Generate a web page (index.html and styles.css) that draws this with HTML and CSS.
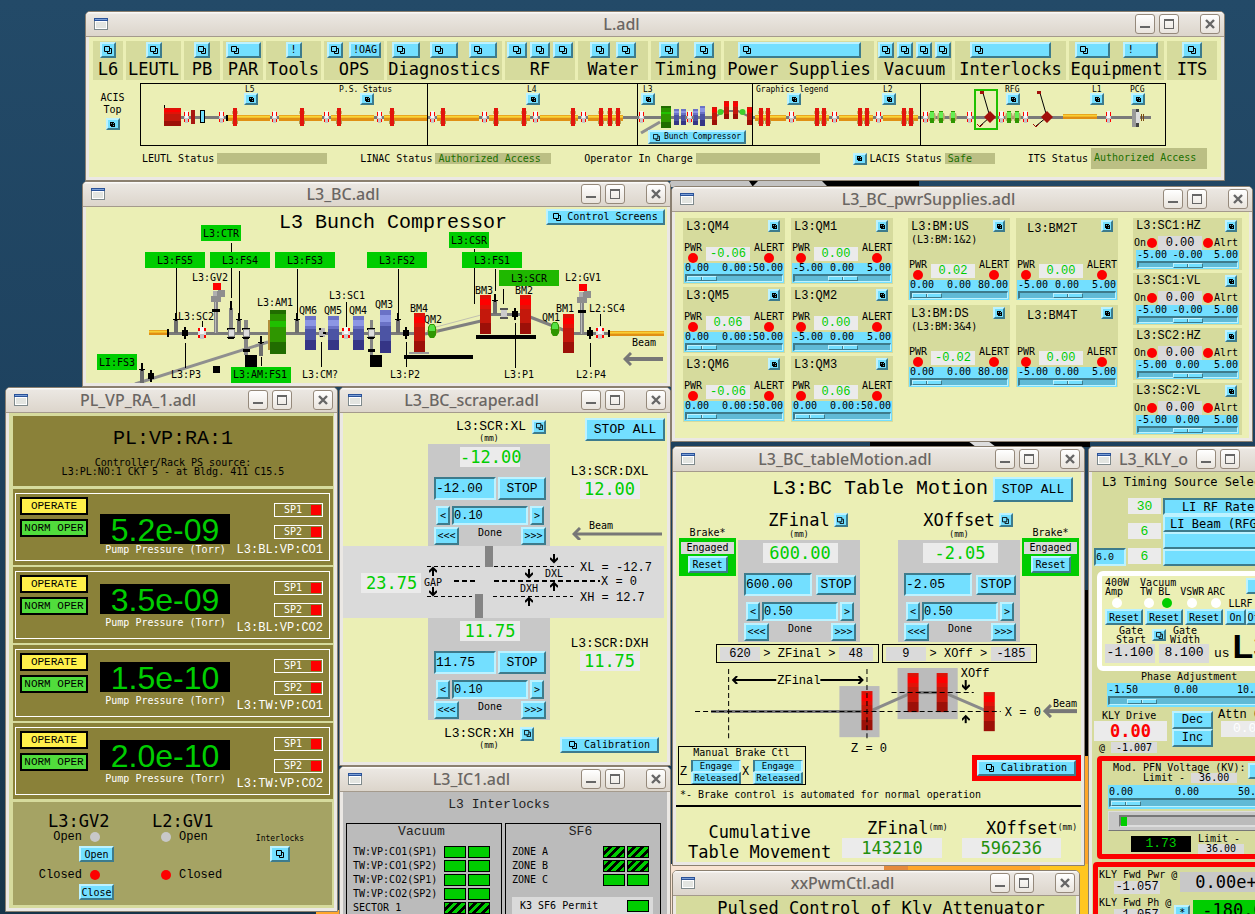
FILE: index.html
```html
<!DOCTYPE html>
<html lang="en">
<head>
<meta charset="utf-8">
<title>L3 Bunch Compressor controls</title>
<link rel="stylesheet" href="styles.css">
</head>
<body>
<svg class="defs" width="0" height="0" aria-hidden="true">
  <defs>
    <symbol id="dup" viewBox="0 0 8 8"><path d="M.5 .5h5v5h-5zM5.5 2.5h2v5h-4v-2" fill="none" stroke="#000"/></symbol>
    <symbol id="dots" viewBox="0 0 5 5"><path d="M0 0h4v1h1v4h-4v-1h-1z"/><path d="M1 1h1v1h-1zM3 3h1v1h-1zM3 1h1v1h-1z" fill="#4fa5bb"/></symbol>
    <symbol id="app" viewBox="0 0 14 12"><rect width="14" height="12" fill="#7f8a8c"/><rect x="1" y="1" width="12" height="10" fill="#fff"/><rect x="2" y="4" width="10" height="6" fill="#e3e5e1"/><rect width="14" height="3" fill="#2a5299"/><rect x="1" y="1" width="12" height="1" fill="#7b9fd6"/></symbol>
    <symbol id="min" viewBox="0 0 12 12"><rect x="1" y="8" width="10" height="2" fill="#666"/></symbol>
    <symbol id="max" viewBox="0 0 12 12"><rect x="1.5" y="1.5" width="9" height="9" fill="none" stroke="#666"/><rect x="1" y="1" width="10" height="2" fill="#666"/></symbol>
    <symbol id="close" viewBox="0 0 12 12"><path d="M2 2l8 8M10 2l-8 8" stroke="#666" stroke-width="2.4"/></symbol>
    <linearGradient id="gold" x1="0" y1="0" x2="0" y2="1"><stop offset=".15" stop-color="#eaa61e"/><stop offset=".2" stop-color="#fbdc3a"/><stop offset=".5" stop-color="#f0b428"/><stop offset=".55" stop-color="#e08f14"/></linearGradient>
    <linearGradient id="red" x1="0" y1="0" x2="0" y2="1"><stop offset=".1" stop-color="#de1208"/><stop offset=".1" stop-color="#ff0000"/><stop offset=".25" stop-color="#ff0000"/><stop offset=".25" stop-color="#e21208"/><stop offset=".36" stop-color="#e21208"/><stop offset=".36" stop-color="#c4180c"/><stop offset=".73" stop-color="#c4180c"/><stop offset=".73" stop-color="#9c1008"/></linearGradient>
    <linearGradient id="blue" x1="0" y1="0" x2="0" y2="1"><stop offset=".12" stop-color="#6a72c6"/><stop offset=".12" stop-color="#8c96e4"/><stop offset=".28" stop-color="#8c96e4"/><stop offset=".28" stop-color="#6a72c6"/><stop offset=".38" stop-color="#6a72c6"/><stop offset=".38" stop-color="#4c54a4"/><stop offset=".72" stop-color="#4c54a4"/><stop offset=".72" stop-color="#353586"/></linearGradient>
    <linearGradient id="green" x1="0" y1="0" x2="0" y2="1"><stop offset=".1" stop-color="#216c00"/><stop offset=".1" stop-color="#2c9200"/><stop offset=".25" stop-color="#2c9200"/><stop offset=".25" stop-color="#20c000"/><stop offset=".38" stop-color="#20c000"/><stop offset=".38" stop-color="#2f9600"/><stop offset=".72" stop-color="#2f9600"/><stop offset=".72" stop-color="#216c00"/></linearGradient>
    <g id="flange"><rect x="-4" y="-1" width="9" height="3" fill="#7a7a7a"/><path d="M-2-5h1v10h-1zM2-5h1v10h-1z" fill="#f00"/><path d="M-2-1h5v3h-5z" fill="#ccc"/><rect x="-1" y="-6" width="3" height="12" fill="#f6f6f6"/><rect x="-1" y="1" width="3" height="5" fill="#c6c6c6"/></g>
    <g id="flangelg"><rect x="-4" y="-5" width="8" height="10" fill="#f00"/><rect x="-4" y="-2" width="8" height="4" fill="#ddd"/><rect x="-2" y="-6" width="4" height="12" fill="#f6f6f6"/><rect x="-2" y="1" width="4" height="5" fill="#c6c6c6"/></g>
    <g id="disk"><rect x="-3" y="-6" width="6" height="3" fill="#c9b567"/><rect x="-3" y="3" width="6" height="4" fill="#b59b50"/><rect x="-2" y="-9" width="4" height="18" fill="#e2160c"/></g>
    <g id="quad"><path d="M-4 0l1-4h6l1 4l-1 4h-6z" fill="#b7a96c"/><rect x="-2" y="-6" width="4" height="12" fill="#2f9600"/><rect x="-2" y="-5" width="4" height="6" fill="#66ef52"/></g>
    <g id="bigquad"><path d="M-5 0l3-4h5l3 4l-3 5h-5z" fill="#a99c58"/><path d="M-2-7h4l2 3v8l-2 3h-4l-2-3v-8z" fill="#2f9600"/><path d="M-2-6h4l1 3v3h-6v-3z" fill="#57e145"/></g>
    <g id="station"><rect x="-2" y="-13" width="4" height="13" fill="#6e6e6e"/><rect x="-1" y="-20" width="2" height="8"/><rect x="-3" y="-14" width="6" height="1"/></g>
    <g id="probe"><path d="M-1-6h2v3h2v6h-2v3h-2v-3h-2v-6h2z"/></g>
    <g id="cross"><path d="M-4-5h8v2h-8zM-4 4h8v1h-1v1h-6v-1h-1z"/><rect x="-3" y="-4" width="7" height="8" fill="#8a8a8a"/><rect x="-2" y="-3" width="5" height="6" fill="#dcdcdc"/></g>
    <g id="valve"><rect x="1" y="18" width="4" height="32" fill="#858585"/><rect x="2" y="18" width="1" height="32" fill="#bbb"/><rect width="8" height="7" fill="#f00"/><path d="M0 8h5v-1h7v7h-4v5h-10v-6h2z" fill="#8e8e8e"/><path d="M0 8h4v5h-4z" fill="#b0b0b0"/><rect x="-1" y="26" width="8" height="3"/></g>
    <marker id="tip" viewBox="0 0 8 8" refX="6" refY="4" markerWidth="8" markerHeight="8" markerUnits="userSpaceOnUse" orient="auto-start-reverse"><path d="M2 0l4 4l-4 4" fill="none" stroke="#000" stroke-width="2"/></marker>
    <marker id="beamtip" viewBox="0 0 9 14" refX="6" refY="7" markerWidth="9" markerHeight="14" markerUnits="userSpaceOnUse" orient="auto-start-reverse"><path d="M1 1l6 6l-6 6" fill="none" stroke="#777" stroke-width="3"/></marker>
  </defs>
</svg>

<main class="desktop">
<svg class="wallpaper" viewBox="0 0 1255 914" preserveAspectRatio="none" aria-hidden="true">
  <rect x="671" y="181" width="248" height="6"/><path d="M671 181l-4 6h86l-4-6zM752 187l6-6h64l6 6z" fill="#c3c3c3"/>
  <rect x="870" y="441" width="220" height="6"/><path d="M968 441h20l8 6h-20z" fill="#ddd"/>
  <rect x="1084" y="590" width="6" height="170"/><rect x="1084" y="756" width="6" height="158" fill="#ffa62a"/>
  <rect x="660" y="864" width="430" height="50" fill="#f9e4d2"/><path d="M884 864h206v50h-206z" fill="#e58a3c"/><path d="M908 864h182v50h-182z" fill="#ffa62a"/><path d="M1040 864h50v50h-50z" fill="#ffc61f"/>
  <rect x="316" y="910" width="24" height="4" fill="#ffa62a"/>
</svg>

<section class="win w-main">
  <header class="bar"><svg class="app"><use href="#app"/></svg><h1>L.adl</h1><button aria-label="Minimize"><svg><use href="#min"/></svg></button><button aria-label="Maximize"><svg><use href="#max"/></svg></button><button class="x" aria-label="Close"><svg><use href="#close"/></svg></button></header>
  <div class="body main">
    <nav class="groups">
      <div class="g g30"><div><button class="b" aria-label="L6"><svg class="i"><use href="#dup"/></svg></button></div><h2>L6</h2></div>
      <div class="g g55"><div><button class="b" aria-label="LEUTL"><svg class="i"><use href="#dup"/></svg></button></div><h2>LEUTL</h2></div>
      <div class="g g36"><div><button class="b" aria-label="PB"><svg class="i"><use href="#dup"/></svg></button></div><h2>PB</h2></div>
      <div class="g g40"><div><button class="b w35" aria-label="PAR"><svg class="i"><use href="#dup"/></svg></button></div><h2>PAR</h2></div>
      <div class="g g55"><div><button class="b">!</button></div><h2>Tools</h2></div>
      <div class="g g60"><div><button class="b" aria-label="OPS"><svg class="i"><use href="#dup"/></svg></button><button class="b w32">!OAG</button></div><h2>OPS</h2></div>
      <div class="g g115"><div><button class="b w28" aria-label="Diagnostics 1"><svg class="i"><use href="#dup"/></svg></button><button class="b w28" aria-label="Diagnostics 2"><svg class="i"><use href="#dup"/></svg></button><button class="b w28" aria-label="Diagnostics 3"><svg class="i"><use href="#dup"/></svg></button></div><h2>Diagnostics</h2></div>
      <div class="g g70"><div><button class="b w20" aria-label="RF 1"><svg class="i"><use href="#dup"/></svg></button><button class="b w20" aria-label="RF 2"><svg class="i"><use href="#dup"/></svg></button><button class="b w20" aria-label="RF 3"><svg class="i"><use href="#dup"/></svg></button></div><h2>RF</h2></div>
      <div class="g g70 near"><div><button class="b w20" aria-label="Water 1"><svg class="i"><use href="#dup"/></svg></button><button class="b w20" aria-label="Water 2"><svg class="i"><use href="#dup"/></svg></button></div><h2>Water</h2></div>
      <div class="g g70"><div><button class="b w20" aria-label="Timing 1"><svg class="i"><use href="#dup"/></svg></button><button class="b w20" aria-label="Timing 2"><svg class="i"><use href="#dup"/></svg></button></div><h2>Timing</h2></div>
      <div class="g g150"><div><button class="b w123" aria-label="Power Supplies"><svg class="i"><use href="#dup"/></svg></button></div><h2>Power Supplies</h2></div>
      <div class="g g75"><div><button class="b" aria-label="Vacuum 1"><svg class="i"><use href="#dup"/></svg></button><button class="b" aria-label="Vacuum 2"><svg class="i"><use href="#dup"/></svg></button><button class="b" aria-label="Vacuum 3"><svg class="i"><use href="#dup"/></svg></button><button class="b" aria-label="Vacuum 4"><svg class="i"><use href="#dup"/></svg></button></div><h2>Vacuum</h2></div>
      <div class="g g111"><div><button class="b w81" aria-label="Interlocks"><svg class="i"><use href="#dup"/></svg></button></div><h2>Interlocks</h2></div>
      <div class="g g95"><div><button class="b w35" aria-label="Equipment"><svg class="i"><use href="#dup"/></svg></button><button class="b w35">!</button></div><h2>Equipment</h2></div>
      <div class="g g50"><div><button class="b w20" aria-label="ITS"><svg class="i"><use href="#dup"/></svg></button></div><h2>ITS</h2></div>
    </nav>
    <div class="linac">
      <div class="acis"><span>ACIS<br>Top</span><button class="b m" aria-label="ACIS Top"><svg class="d"><use href="#dots"/></svg></button></div>
      <div class="canvas">
        <svg viewBox="140 83 1026 63" class="draw">
          <rect x="140.500" y="83.500" width="1025" height="62" fill="none" stroke="#000"/>
          <rect x="165" y="116" width="463" height="3" fill="#7a7a7a"/><rect x="622" y="116" width="95" height="3" fill="#7a7a7a"/><rect x="750" y="116" width="401" height="3" fill="#7a7a7a"/>
          <g fill="url(#gold)"><rect x="228" y="115" width="42" height="6"/><rect x="279" y="115" width="43" height="6"/><rect x="331" y="115" width="43" height="6"/><rect x="384" y="115" width="43" height="6"/><rect x="437" y="115" width="42" height="6"/><rect x="489" y="115" width="41" height="6"/><rect x="540" y="115" width="38" height="6"/><rect x="588" y="115" width="35" height="6"/><rect x="755" y="115" width="31" height="6"/><rect x="796" y="115" width="33" height="6"/><rect x="839" y="115" width="34" height="6"/><rect x="883" y="115" width="35" height="6"/><rect x="1063" y="114" width="34" height="5"/></g>
          <path d="M427.500 83v62M637.500 83v62M752.500 83v62M920.500 83v62" stroke="#000"/>
          <rect x="164" y="108" width="17" height="18" fill="url(#red)"/><path d="M164.500 105v3" stroke="#000"/>
          <rect x="191" y="110" width="4" height="14" fill="#a81710"/><rect x="200.500" y="110.500" width="4" height="12" fill="#73dfff" stroke="#000"/><rect x="226" y="115" width="2" height="6"/>
          <g><use href="#flange" x="186" y="117"/><use href="#flange" x="221" y="117"/><use href="#flange" x="274" y="117"/><use href="#flange" x="326" y="117"/><use href="#flange" x="379" y="117"/><use href="#flange" x="432" y="117"/><use href="#flange" x="484" y="117"/><use href="#flange" x="535" y="117"/><use href="#flange" x="583" y="117"/><use href="#flange" x="641" y="117"/><use href="#flange" x="791" y="117"/><use href="#flange" x="834" y="117"/><use href="#flange" x="878" y="117"/><use href="#flange" x="925" y="117"/><use href="#flange" x="969" y="117"/><use href="#flange" x="1001" y="117"/><use href="#flange" x="1025" y="117"/><use href="#flange" x="1108" y="117"/></g>
          <g><use href="#disk" x="235" y="117"/><use href="#disk" x="302" y="117"/><use href="#disk" x="339" y="117"/><use href="#disk" x="392" y="117"/><use href="#disk" x="443" y="117"/><use href="#disk" x="496" y="117"/><use href="#disk" x="524" y="117"/><use href="#disk" x="573" y="117"/><use href="#disk" x="601" y="117"/><use href="#disk" x="610" y="117"/><use href="#disk" x="618" y="117"/><use href="#disk" x="761" y="117"/><use href="#disk" x="768" y="117"/><use href="#disk" x="817" y="117"/><use href="#disk" x="824" y="117"/><use href="#disk" x="860" y="117"/><use href="#disk" x="867" y="117"/><use href="#disk" x="904" y="117"/><use href="#disk" x="911" y="117"/></g>
          <path d="M641 133l19-11" stroke="#8f8f8f" stroke-width="3"/><rect x="661" y="106" width="10" height="22" fill="url(#green)"/>
          <g fill="url(#blue)"><rect x="674" y="109" width="5" height="16"/><rect x="681" y="109" width="5" height="16"/><rect x="693" y="109" width="5" height="16"/><rect x="700" y="106" width="5" height="20"/></g><use href="#flange" x="689" y="117"/>
          <path d="M715 117l9-6h14l12 6" fill="none" stroke="#7a7a7a" stroke-width="2"/>
          <g fill="url(#red)"><rect x="712" y="107" width="5" height="18"/><rect x="724" y="101" width="5" height="18"/><rect x="733" y="101" width="5" height="18"/><rect x="747" y="107" width="5" height="18"/></g>
          <circle cx="720.500" cy="112" r="3" fill="#3fce2c"/><circle cx="742.500" cy="112" r="3" fill="#3fce2c"/>
          <g><use href="#quad" x="932" y="117"/><use href="#quad" x="941" y="117"/><use href="#quad" x="953" y="117"/><use href="#quad" x="1009" y="117"/><use href="#quad" x="1017" y="117"/></g>
          <rect x="975" y="90" width="22" height="39" fill="none" stroke="#20c000" stroke-width="2"/>
          <path d="M990 117l-7-24M990 117l-10 9M1047 117l-7-24M1047 117l-11 9" stroke="#000"/>
          <path d="M990 111l6 6l-6 6l-6-6zM1047 111l6 6l-6 6l-6-6zM980 91h4v3h-4zM1037 91h4v3h-4z" fill="#a1100a"/><path d="M977 124l3 3l3-3M1033 124l3 3l3-3" fill="none" stroke="#a1100a"/>
          <rect x="1132" y="109" width="7" height="18" fill="#999"/><path d="M1136 109h3v4h-3zM1136 122h3v5h-3z" fill="#444"/><rect x="1136" y="112" width="4" height="11" fill="#ddd"/><path d="M1141.500 114v7M1143.500 114v7" stroke="#7a4a10"/>
          <g class="t8"><text x="245" y="92">L5</text><text x="339" y="92">P.S. Status</text><text x="527" y="92">L4</text><text x="643" y="92">L3</text><text x="756" y="92">Graphics legend</text><text x="883" y="92">L2</text><text x="1005" y="92">RFG</text><text x="1092" y="92">L1</text><text x="1130" y="92">PCG</text></g>
        </svg>
        <button class="b m pin p-l5" aria-label="L5"><svg class="d"><use href="#dots"/></svg></button>
        <button class="b m pin p-ps" aria-label="P.S. Status"><svg class="d"><use href="#dots"/></svg></button>
        <button class="b m pin p-l4" aria-label="L4"><svg class="d"><use href="#dots"/></svg></button>
        <button class="b m pin p-l3" aria-label="L3"><svg class="d"><use href="#dots"/></svg></button>
        <button class="b m pin p-gl" aria-label="Graphics legend"><svg class="d"><use href="#dots"/></svg></button>
        <button class="b m pin p-l2" aria-label="L2"><svg class="d"><use href="#dots"/></svg></button>
        <button class="b m pin p-rfg" aria-label="RFG"><svg class="d"><use href="#dots"/></svg></button>
        <button class="b m pin p-l1" aria-label="L1"><svg class="d"><use href="#dots"/></svg></button>
        <button class="b m pin p-pcg" aria-label="PCG"><svg class="d"><use href="#dots"/></svg></button>
        <button class="b pin p-bc"><svg class="d"><use href="#dup"/></svg>Bunch Compressor</button>
      </div>
    </div>
    <div class="status">
      <span>LEUTL Status <output class="s110"></output></span>
      <span>LINAC Status <output class="s116">Authorized Access</output></span>
      <span>Operator In Charge <output class="s124"></output></span>
      <span><button class="b m" aria-label="LACIS"><svg class="d"><use href="#dots"/></svg></button>LACIS Status <output class="s50">Safe</output></span>
      <span class="its">ITS Status <output class="s116 tall">Authorized Access</output></span>
    </div>
  </div>
</section>

<section class="win w-bc">
  <header class="bar"><svg class="app"><use href="#app"/></svg><h1>L3_BC.adl</h1><button aria-label="Minimize"><svg><use href="#min"/></svg></button><button aria-label="Maximize"><svg><use href="#max"/></svg></button><button class="x" aria-label="Close"><svg><use href="#close"/></svg></button></header>
  <div class="body canvas">
    <svg viewBox="86 207 581 176" class="draw">
      <text x="393" y="228" text-anchor="middle" class="t20">L3 Bunch Compressor</text>
      <path d="M135 384L268 342" stroke="#8f8f8f" stroke-width="3"/>
      <g fill="#7a7a7a"><rect x="168" y="332" width="252" height="3"/><rect x="565" y="332" width="46" height="3"/><rect x="485" y="313" width="40" height="3"/></g>
      <path d="M425 334l56-13M530 317l36 14" stroke="#7f7f7f" stroke-width="3"/><path d="M436 327l45-12" stroke="#c0c0b0"/>
      <rect x="149" y="330" width="19" height="5" fill="url(#gold)"/><rect x="167" y="329" width="2" height="8"/><rect x="610" y="331" width="54" height="5" fill="url(#gold)"/><rect x="608" y="330" width="2" height="7"/>
      <path d="M176.500 268v50M231.500 243v55M239.500 271v42M297.500 269v44M398.500 269v44M474.500 249v55M495.500 269v22M503.500 289v15M515.500 323v45M590.500 343v24M600.500 314v12M406.500 342v25M321.500 342v25M346.500 302v25M185.500 343v25M202.500 321v6M261.500 357v9" stroke="#000"/>
      <g fill="#00cd00"><rect x="201" y="225" width="40" height="16"/><rect x="145" y="252" width="60" height="16"/><rect x="210" y="252" width="60" height="16"/><rect x="275" y="252" width="60" height="16"/><rect x="367" y="252" width="60" height="16"/><rect x="462" y="252" width="60" height="16"/><rect x="449" y="232" width="40" height="16"/><rect x="97" y="354" width="40" height="16"/><rect x="231" y="367" width="60" height="16"/><rect x="499" y="270" width="60" height="16" fill="#1fb800"/></g>
      <g><use href="#station" x="176" y="333"/><use href="#station" x="239" y="333"/><use href="#station" x="297" y="333"/><use href="#station" x="398" y="333"/><use href="#station" x="495" y="314"/><use href="#station" x="142" y="383"/><use href="#station" x="261" y="356"/></g>
      <rect x="229" y="308" width="4" height="24" fill="#858585"/><rect x="230" y="301" width="2" height="9"/>
      <g fill="#858585"><rect x="244" y="320" width="4" height="35"/><rect x="370" y="320" width="3" height="35"/></g><rect x="243" y="349" width="7" height="3"/><rect x="368" y="349" width="7" height="3"/>
      <use href="#cross" x="231" y="333"/><use href="#cross" x="246" y="333"/><use href="#cross" x="371" y="333"/>
      <g><use href="#probe" x="185" y="333"/><use href="#probe" x="151" y="376"/><use href="#probe" x="406" y="333"/><use href="#probe" x="515" y="314"/><use href="#probe" x="590" y="333"/></g>
      <g><use href="#flangelg" x="202" y="333"/><use href="#flangelg" x="346" y="333"/><use href="#flangelg" x="600" y="333"/></g>
      <use href="#valve" x="213" y="283"/><use href="#valve" x="579" y="284"/>
      <rect x="319" y="328" width="6" height="9" fill="#b9b9b9"/><path d="M319 328h2v2h-2zM323 332h3v2h-3zM320 336h3v1h-3z"/><rect x="501" y="308" width="6" height="11" fill="#ccc"/><path d="M500 308h8v2h-8zM500 317h8v2h-8z" fill="#555"/>
      <rect x="268" y="320" width="3" height="30" fill="#b08c3a"/><rect x="270" y="310" width="16" height="44" fill="url(#green)"/>
      <g fill="url(#blue)"><rect x="305" y="316" width="11" height="34"/><rect x="328" y="316" width="11" height="34"/><rect x="353" y="316" width="11" height="34"/><rect x="380" y="310" width="11" height="43"/></g>
      <g fill="url(#red)"><rect x="414" y="313" width="11" height="39"/><rect x="480" y="295" width="11" height="39"/><rect x="520" y="295" width="11" height="39"/><rect x="563" y="314" width="11" height="39"/></g>
      <use href="#bigquad" x="432" y="331"/><use href="#bigquad" x="555" y="329"/>
      <rect x="409" y="352" width="20" height="2" fill="#999"/>
      <path d="M404 355h69v4h-69zM476 335h60v4h-60zM245 355h12v12h-12zM213 366h7v7h-7zM370 355h12v12h-12z"/>
      <path d="M663 359H626" stroke="#777" stroke-width="4" marker-end="url(#beamtip)"/>
      <g class="t10"><g text-anchor="middle"><text x="221" y="237">L3:CTR</text><text x="175" y="264">L3:FS5</text><text x="240" y="264">L3:FS4</text><text x="305" y="264">L3:FS3</text><text x="397" y="264">L3:FS2</text><text x="492" y="264">L3:FS1</text><text x="469" y="244">L3:CSR</text><text x="529" y="282">L3:SCR</text><text x="117" y="366">LI:FS3</text><text x="260" y="378">L3:AM:FS1</text></g>
      <text x="192" y="281">L3:GV2</text><text x="257" y="306">L3:AM1</text><text x="178" y="320">L3:SC2</text><text x="299" y="314">QM6</text><text x="324" y="314">QM5</text><text x="349" y="314">QM4</text><text x="329" y="299">L3:SC1</text><text x="171" y="378">L3:P3</text><text x="302" y="378">L3:CM?</text><text x="375" y="308">QM3</text><text x="410" y="312">BM4</text><text x="424" y="323">QM2</text><text x="475" y="294">BM3</text><text x="515" y="294">BM2</text><text x="542" y="321">QM1</text><text x="556" y="312">BM1</text><text x="565" y="281">L2:GV1</text><text x="589" y="312">L2:SC4</text><text x="390" y="378">L3:P2</text><text x="504" y="378">L3:P1</text><text x="576" y="378">L2:P4</text><text x="632" y="346">Beam</text></g>
    </svg>
    <button class="b pin p-cs"><svg class="i"><use href="#dup"/></svg>Control Screens</button>
  </div>
</section>

<section class="win w-ps">
  <header class="bar"><svg class="app"><use href="#app"/></svg><h1>L3_BC_pwrSupplies.adl</h1><button aria-label="Minimize"><svg><use href="#min"/></svg></button><button aria-label="Maximize"><svg><use href="#max"/></svg></button><button class="x" aria-label="Close"><svg><use href="#close"/></svg></button></header>
  <div class="body supplies">
    <div class="pair">
      <div class="col">
        <article class="ps"><h3>L3:QM4</h3><button class="b s" aria-label="QM4"><svg class="d"><use href="#dots"/></svg></button><div class="mid"><span>PWR<i class="lamp"></i></span><output>-0.06</output><span>ALERT<i class="lamp"></i></span></div><div class="sl"><p><span>0.00</span><span>0.00</span><span>:50.00</span></p><input type="range" value="0" aria-label="QM4 current"></div></article>
        <article class="ps"><h3>L3:QM5</h3><button class="b s" aria-label="QM5"><svg class="d"><use href="#dots"/></svg></button><div class="mid"><span>PWR<i class="lamp"></i></span><output>0.06</output><span>ALERT<i class="lamp"></i></span></div><div class="sl"><p><span>0.00</span><span>0.00</span><span>:50.00</span></p><input type="range" value="0" aria-label="QM5 current"></div></article>
        <article class="ps"><h3>L3:QM6</h3><button class="b s" aria-label="QM6"><svg class="d"><use href="#dots"/></svg></button><div class="mid"><span>PWR<i class="lamp"></i></span><output>-0.06</output><span>ALERT<i class="lamp"></i></span></div><div class="sl"><p><span>0.00</span><span>0.00</span><span>:50.00</span></p><input type="range" value="0" aria-label="QM6 current"></div></article>
      </div>
      <div class="col">
        <article class="ps"><h3>L3:QM1</h3><button class="b s" aria-label="QM1"><svg class="d"><use href="#dots"/></svg></button><div class="mid"><span>PWR<i class="lamp"></i></span><output>0.00</output><span>ALERT<i class="lamp"></i></span></div><div class="sl"><p><span>-5.00</span><span>0.00</span><span>5.00</span></p><input type="range" value="50" aria-label="QM1 current"></div></article>
        <article class="ps"><h3>L3:QM2</h3><button class="b s" aria-label="QM2"><svg class="d"><use href="#dots"/></svg></button><div class="mid"><span>PWR<i class="lamp"></i></span><output>0.00</output><span>ALERT<i class="lamp"></i></span></div><div class="sl"><p><span>-5.00</span><span>0.00</span><span>5.00</span></p><input type="range" value="50" aria-label="QM2 current"></div></article>
        <article class="ps"><h3>L3:QM3</h3><button class="b s" aria-label="QM3"><svg class="d"><use href="#dots"/></svg></button><div class="mid"><span>PWR<i class="lamp"></i></span><output>0.06</output><span>ALERT<i class="lamp"></i></span></div><div class="sl"><p><span>0.00</span><span>0.00</span><span>:50.00</span></p><input type="range" value="0" aria-label="QM3 current"></div></article>
      </div>
    </div>
    <div class="pair wide">
      <div class="col">
        <article class="ps"><h3>L3:BM:US<small>(L3:BM:1&amp;2)</small></h3><button class="b s" aria-label="BM US"><svg class="d"><use href="#dots"/></svg></button><div class="mid"><span>PWR<i class="lamp"></i></span><output>0.02</output><span>ALERT<i class="lamp"></i></span></div><div class="sl"><p><span>0.00</span><span>0.00</span><span>80.00</span></p><input type="range" value="0" aria-label="BM US current"></div></article>
        <article class="ps"><h3>L3:BM:DS<small>(L3:BM:3&amp;4)</small></h3><button class="b s" aria-label="BM DS"><svg class="d"><use href="#dots"/></svg></button><div class="mid"><span>PWR<i class="lamp"></i></span><output>-0.02</output><span>ALERT<i class="lamp"></i></span></div><div class="sl"><p><span>0.00</span><span>0.00</span><span>80.00</span></p><input type="range" value="0" aria-label="BM DS current"></div></article>
      </div>
      <div class="col">
        <article class="ps ctr"><h3>L3:BM2T</h3><button class="b s" aria-label="BM2T"><svg class="d"><use href="#dots"/></svg></button><div class="mid"><span>PWR<i class="lamp"></i></span><output>0.00</output><span>ALERT<i class="lamp"></i></span></div><div class="sl"><p><span>-5.00</span><span>0.00</span><span>5.00</span></p><input type="range" value="50" aria-label="BM2T current"></div></article>
        <article class="ps ctr"><h3>L3:BM4T</h3><button class="b s" aria-label="BM4T"><svg class="d"><use href="#dots"/></svg></button><div class="mid"><span>PWR<i class="lamp"></i></span><output>0.00</output><span>ALERT<i class="lamp"></i></span></div><div class="sl"><p><span>-5.00</span><span>0.00</span><span>5.00</span></p><input type="range" value="50" aria-label="BM4T current"></div></article>
      </div>
    </div>
    <div class="col sc">
      <article class="ps"><h3>L3:SC1:HZ</h3><button class="b s" aria-label="SC1 HZ"><svg class="d"><use href="#dots"/></svg></button><div class="mid">On<i class="lamp"></i><output>0.00</output><i class="lamp"></i>Alrt</div><div class="sl"><p><span>-5.00</span><span>-0.00</span><span>5.00</span></p><input type="range" value="50" aria-label="SC1 HZ current"></div></article>
      <article class="ps"><h3>L3:SC1:VL</h3><button class="b s" aria-label="SC1 VL"><svg class="d"><use href="#dots"/></svg></button><div class="mid">On<i class="lamp"></i><output>0.00</output><i class="lamp"></i>Alrt</div><div class="sl"><p><span>-5.00</span><span>-0.00</span><span>5.00</span></p><input type="range" value="50" aria-label="SC1 VL current"></div></article>
      <article class="ps"><h3>L3:SC2:HZ</h3><button class="b s" aria-label="SC2 HZ"><svg class="d"><use href="#dots"/></svg></button><div class="mid">On<i class="lamp"></i><output>0.00</output><i class="lamp"></i>Alrt</div><div class="sl"><p><span>-5.00</span><span>0.00</span><span>5.00</span></p><input type="range" value="50" aria-label="SC2 HZ current"></div></article>
      <article class="ps"><h3>L3:SC2:VL</h3><button class="b s" aria-label="SC2 VL"><svg class="d"><use href="#dots"/></svg></button><div class="mid">On<i class="lamp"></i><output>0.00</output><i class="lamp"></i>Alrt</div><div class="sl"><p><span>-5.00</span><span>0.00</span><span>5.00</span></p><input type="range" value="50" aria-label="SC2 VL current"></div></article>
    </div>
  </div>
</section>

<section class="win w-vp">
  <header class="bar"><svg class="app"><use href="#app"/></svg><h1>PL_VP_RA_1.adl</h1><button aria-label="Minimize"><svg><use href="#min"/></svg></button><button aria-label="Maximize"><svg><use href="#max"/></svg></button><button class="x" aria-label="Close"><svg><use href="#close"/></svg></button></header>
  <div class="body vp">
    <div class="olive vhead"><h2>PL:VP:RA:1</h2><p>Controller/Rack PS source:</p><p>L3:PL:NO:1 CKT 5 - at Bldg. 411 C15.5</p></div>
    <article class="olive pump first"><div class="box"><div class="modes"><b class="op">OPERATE</b><b class="norm">NORM OPER</b></div><div class="press"><output>5.2e-09</output><p>Pump Pressure (Torr)</p></div><div class="sps"><span>SP1<i></i></span><span>SP2<i></i></span><h3>L3:BL:VP:CO1</h3></div></div></article>
    <article class="olive pump"><div class="box"><div class="modes"><b class="op">OPERATE</b><b class="norm">NORM OPER</b></div><div class="press"><output>3.5e-09</output><p>Pump Pressure (Torr)</p></div><div class="sps"><span>SP1<i></i></span><span>SP2<i></i></span><h3>L3:BL:VP:CO2</h3></div></div></article>
    <article class="olive pump"><div class="box"><div class="modes"><b class="op">OPERATE</b><b class="norm">NORM OPER</b></div><div class="press"><output>1.5e-10</output><p>Pump Pressure (Torr)</p></div><div class="sps"><span>SP1<i></i></span><span>SP2<i></i></span><h3>L3:TW:VP:CO1</h3></div></div></article>
    <article class="olive pump"><div class="box"><div class="modes"><b class="op">OPERATE</b><b class="norm">NORM OPER</b></div><div class="press"><output>2.0e-10</output><p>Pump Pressure (Torr)</p></div><div class="sps"><span>SP1<i></i></span><span>SP2<i></i></span><h3>L3:TW:VP:CO2</h3></div></div></article>
    <div class="gates">
      <div class="gv left"><h3>L3:GV2</h3><p>Open<i class="lamp off"></i></p><button class="b">Open</button><p>Closed<i class="lamp"></i></p><button class="b">Close</button></div>
      <div class="gv"><h3>L2:GV1</h3><p><i class="lamp off"></i>Open</p><p class="second"><i class="lamp"></i>Closed</p></div>
      <div class="il"><label for="il">Interlocks</label><button class="b w20" id="il" aria-label="Interlocks"><svg class="i"><use href="#dup"/></svg></button></div>
    </div>
  </div>
</section>

<section class="win w-sc">
  <header class="bar"><svg class="app"><use href="#app"/></svg><h1>L3_BC_scraper.adl</h1><button aria-label="Minimize"><svg><use href="#min"/></svg></button><button aria-label="Maximize"><svg><use href="#max"/></svg></button><button class="x" aria-label="Close"><svg><use href="#close"/></svg></button></header>
  <div class="body scraper">
    <div class="srow">
      <div class="mcol xl"><h3>L3:SCR:XL<button class="b m" aria-label="XL"><svg class="d"><use href="#dup"/></svg></button></h3><small>(mm)</small>
        <div class="motor"><output class="lcd">-12.00</output><div class="r1"><input value="-12.00" aria-label="XL setpoint"><button class="b">STOP</button></div><div class="r2"><button class="b">&lt;</button><input value="0.10" aria-label="XL tweak"><button class="b">&gt;</button></div><div class="r3"><button class="b">&lt;&lt;&lt;</button><span>Done</span><button class="b">&gt;&gt;&gt;</button></div></div></div>
      <div class="side"><button class="b stopall">STOP ALL</button><h3>L3:SCR:DXL</h3><output class="lcd">12.00</output>
        <svg class="beam" viewBox="0 0 96 20"><text x="20" y="9" class="t10">Beam</text><path d="M93 14H6" stroke="#777" stroke-width="3" marker-end="url(#beamtip)"/></svg></div>
    </div>
    <svg viewBox="343 547 324 72" class="draw">
      <rect x="343" y="547" width="321" height="72" fill="#dadada"/><rect x="361" y="574" width="60" height="20" fill="#ebebeb"/><text x="366" y="590" class="t17 grn">23.75</text>
      <rect x="485" y="547" width="8" height="21" fill="#848484"/><rect x="475" y="595" width="8" height="24" fill="#848484"/>
      <path d="M427 567.500h56M494 567.500h80M427 597.500h45M493 597.500h80" stroke="#000" stroke-dasharray="4 3"/><path d="M454 582h22M494 582h106" stroke="#000" stroke-width="2" stroke-dasharray="5 3"/>
      <g stroke="#000" stroke-width="2" marker-end="url(#tip)"><path d="M433 577v-8"/><path d="M433 588v8"/><path d="M554 555v8"/><path d="M554 592v-8"/><path d="M529 570v8"/><path d="M529 607v-8"/></g>
      <rect x="545" y="569" width="20" height="11" fill="#dadada"/><rect x="519" y="584" width="22" height="11" fill="#dadada"/>
      <g class="t10"><text x="424" y="587">GAP</text><text x="545" y="578">DXL</text><text x="520" y="593">DXH</text></g>
      <g class="t12"><text x="580" y="572">XL = -12.7</text><text x="601" y="586">X = 0</text><text x="580" y="602">XH = 12.7</text></g>
    </svg>
    <div class="srow">
      <div class="mcol"><div class="motor"><output class="lcd">11.75</output><div class="r1"><input value="11.75" aria-label="XH setpoint"><button class="b">STOP</button></div><div class="r2"><button class="b">&lt;</button><input value="0.10" aria-label="XH tweak"><button class="b">&gt;</button></div><div class="r3"><button class="b">&lt;&lt;&lt;</button><span>Done</span><button class="b">&gt;&gt;&gt;</button></div></div>
        <h3>L3:SCR:XH<button class="b m" aria-label="XH"><svg class="d"><use href="#dup"/></svg></button></h3><small>(mm)</small></div>
      <div class="side low"><h3>L3:SCR:DXH</h3><output class="lcd">11.75</output><button class="b cal"><svg class="i"><use href="#dup"/></svg>Calibration</button></div>
    </div>
  </div>
</section>

<section class="win w-ic">
  <header class="bar"><svg class="app"><use href="#app"/></svg><h1>L3_IC1.adl</h1><button aria-label="Minimize"><svg><use href="#min"/></svg></button><button aria-label="Maximize"><svg><use href="#max"/></svg></button><button class="x" aria-label="Close"><svg><use href="#close"/></svg></button></header>
  <div class="body ic">
    <h2>L3 Interlocks</h2>
    <div class="ilocks">
      <div class="frame"><h3>Vacuum</h3>
        <p>TW:VP:CO1(SP1)<i></i><i></i></p><p>TW:VP:CO1(SP2)<i></i><i></i></p><p>TW:VP:CO2(SP1)<i></i><i></i></p><p>TW:VP:CO2(SP2)<i></i><i></i></p><p>SECTOR 1<i class="h"></i><i class="h"></i></p></div>
      <div class="frame"><h3>SF6</h3>
        <p>ZONE A<i class="h"></i><i class="h"></i></p><p>ZONE B<i class="h"></i><i class="h"></i></p><p>ZONE C<i></i><i></i></p><p class="permit">K3 SF6 Permit<i></i></p></div>
    </div>
  </div>
</section>

<section class="win w-tm">
  <header class="bar"><svg class="app"><use href="#app"/></svg><h1>L3_BC_tableMotion.adl</h1><button aria-label="Minimize"><svg><use href="#min"/></svg></button><button aria-label="Maximize"><svg><use href="#max"/></svg></button><button class="x" aria-label="Close"><svg><use href="#close"/></svg></button></header>
  <div class="body table">
    <div class="thead"><h2>L3:BC Table Motion</h2><button class="b stopall">STOP ALL</button></div>
    <div class="axes">
      <div class="brake"><small>Brake*</small><div><output>Engaged</output><button class="b">Reset</button></div></div>
      <div class="mcol"><h3>ZFinal<button class="b m" aria-label="ZFinal"><svg class="d"><use href="#dup"/></svg></button></h3><small>(mm)</small>
        <div class="motor t"><output class="lcd">600.00</output><div class="r1"><input value="600.00" aria-label="ZFinal setpoint"><button class="b">STOP</button></div><div class="r2"><button class="b">&lt;</button><input value="0.50" aria-label="ZFinal tweak"><button class="b">&gt;</button></div><div class="r3"><button class="b">&lt;&lt;&lt;</button><span>Done</span><button class="b">&gt;&gt;&gt;</button></div></div></div>
      <div class="mcol xoff"><h3>XOffset<button class="b m" aria-label="XOffset"><svg class="d"><use href="#dup"/></svg></button></h3><small>(mm)</small>
        <div class="motor t"><output class="lcd">-2.05</output><div class="r1"><input value="-2.05" aria-label="XOffset setpoint"><button class="b">STOP</button></div><div class="r2"><button class="b">&lt;</button><input value="0.50" aria-label="XOffset tweak"><button class="b">&gt;</button></div><div class="r3"><button class="b">&lt;&lt;&lt;</button><span>Done</span><button class="b">&gt;&gt;&gt;</button></div></div></div>
      <div class="brake"><small>Brake*</small><div><output>Engaged</output><button class="b">Reset</button></div></div>
    </div>
    <div class="limits"><div><output class="w40">620</output>&gt; ZFinal &gt;<output>48</output></div><div><output class="w40">9</output>&gt; XOff &gt;<output class="w40">-185</output></div></div>
    <svg viewBox="676 663 404 76" class="draw">
      <rect x="839" y="685" width="40" height="51" fill="#bbb"/><rect x="897" y="667" width="60" height="51" fill="#bbb"/>
      <path d="M711 710.500h157" stroke="#777" stroke-width="3"/><path d="M872 709l36-16M947 693l37 16" stroke="#8a8a8a" stroke-width="3"/><path d="M915 691.500h25" stroke="#777" stroke-width="3"/>
      <g fill="url(#red)"><rect x="861" y="690" width="11" height="39"/><rect x="907" y="672" width="11" height="39"/><rect x="936" y="672" width="11" height="39"/><rect x="983" y="691" width="11" height="39"/></g>
      <path d="M695 710.500h305M728.500 668v70M866.500 668v70M891 691.500h82" stroke="#000" stroke-dasharray="5 3"/>
      <path d="M733 679h129" stroke="#000" stroke-width="2" marker-start="url(#tip)" marker-end="url(#tip)"/><rect x="776" y="672" width="44" height="13" fill="#ebefb5"/>
      <path d="M965 679v9" stroke="#000" stroke-width="2" marker-end="url(#tip)"/><path d="M965 722v-7" stroke="#000" stroke-width="2" marker-end="url(#tip)"/>
      <path d="M1076 710H1045" stroke="#777" stroke-width="4" marker-end="url(#beamtip)"/>
      <g class="t12"><text x="777" y="683">ZFinal</text><text x="960" y="676">XOff</text><text x="1004" y="715">X = 0</text></g><text x="1052" y="706" class="t10">Beam</text>
    </svg>
    <div class="brakes">
      <fieldset><legend>Manual Brake Ctl</legend><span>Z</span><div><button class="b in">Engage</button><button class="b">Released</button></div><span>X</span><div><button class="b in">Engage</button><button class="b">Released</button></div></fieldset>
      <span class="z0">Z = 0</span>
      <div class="redbox"><button class="b cal"><svg class="i"><use href="#dup"/></svg>Calibration</button></div>
    </div>
    <p class="note">*- Brake control is automated for normal operation</p>
    <div class="cum"><h3>Cumulative<br>Table Movement</h3><div><h3>ZFinal<small>(mm)</small></h3><output class="lcd">143210</output></div><div class="xo"><h3>XOffset<small>(mm)</small></h3><output class="lcd">596236</output></div></div>
  </div>
</section>

<section class="win w-pw">
  <header class="bar"><svg class="app"><use href="#app"/></svg><h1>xxPwmCtl.adl</h1><button aria-label="Minimize"><svg><use href="#min"/></svg></button><button aria-label="Maximize"><svg><use href="#max"/></svg></button><button class="x" aria-label="Close"><svg><use href="#close"/></svg></button></header>
  <div class="body pw"><h2>Pulsed Control of Kly Attenuator</h2></div>
</section>

<section class="win w-kl">
  <header class="bar"><svg class="app"><use href="#app"/></svg><h1>L3_KLY_o</h1><button aria-label="Minimize"><svg><use href="#min"/></svg></button><button aria-label="Maximize"><svg><use href="#max"/></svg></button><button class="x" aria-label="Close"><svg><use href="#close"/></svg></button></header>
  <div class="body kly">
    <h2>L3 Timing Source Select</h2>
    <div class="timing">
      <input value="6.0" aria-label="Rate">
      <div class="rates"><output>30</output><output>6</output><output>6</output></div>
      <div class="menu"><button class="b in">LI RF Rate</button><button class="b">LI Beam (RFG)</button><button class="b" aria-label="Source 3"></button><button class="b" aria-label="Source 4"></button></div>
    </div>
    <div class="amp">
      <div class="lamps"><span>400W<br>Amp<i class="lamp w"></i></span><span class="vac">Vacuum<br>TW BL<em><i class="lamp w"></i><i class="lamp ok"></i></em></span><span><br>VSWR<i class="lamp w"></i></span><span><br>ARC<i class="lamp w"></i></span><span class="llrf"><button class="b" aria-label="Amp menu"></button>LLRF</span></div>
      <div class="resets"><button class="b">Reset</button><button class="b">Reset</button><button class="b">Reset</button><button class="b on">On</button><button class="b on">Off</button></div>
      <div class="gate"><div><span>Gate<br>Start</span><output>-1.100</output></div><button class="b m" aria-label="Gate"><svg class="d"><use href="#dup"/></svg></button><div><span>Gate<br>Width</span><output>8.100</output></div><span class="us">us</span><strong>L3</strong></div>
    </div>
    <p class="cap">Phase Adjustment</p>
    <div class="sl k"><p><span>-1.50</span><span>0.00</span><span>10.00</span></p><input type="range" value="12" aria-label="Phase Adjustment"></div>
    <div class="drive"><div><span>KLY Drive</span><output class="rd">0.00</output><span class="at">@ <output>-1.007</output></span></div><div class="di"><button class="b">Dec</button><button class="b">Inc</button></div><div class="attn"><span>Attn Ctl</span><output>0.00</output></div></div>
    <div class="pfn">
      <div class="ptop"><div><span>Mod. PFN Voltage (KV):</span><span class="lim">Limit - <output>36.00</output></span></div><button class="b" aria-label="PFN menu"></button></div>
      <div class="sl k"><p><span>0.00</span><span>0.00</span><span>50.00</span></p><input type="range" value="0" aria-label="PFN Voltage"></div>
      <div class="gauge"><div><i></i></div></div>
      <div class="pbot"><output class="blk">1.73</output><span>Limit -<output>36.00</output></span></div>
    </div>
    <div class="pfn fwd">
      <div><span>KLY Fwd Pwr @<output>-1.057</output></span><output class="pw1">0.00e+00</output></div>
      <div><span>KLY Fwd Ph @<output>-1.057</output></span><button class="b">*</button><output class="pw2">-180.00</output></div>
    </div>
  </div>
</section>
</main>
</body>
</html>
```

FILE: styles.css
```css
* { box-sizing: border-box; }
body, h1, h2, h3, p, fieldset { margin: 0; padding: 0; }
html, body { height: 100%; }
body {
  overflow: hidden;
  font: 10px/12px "DejaVu Sans Mono", monospace;
  color: #000;
}
h1, h2, h3 { font-weight: normal; }
i { font-style: normal; }
output { display: block; white-space: nowrap; }
svg { display: block; flex: none; }
.defs { position: absolute; }
.desktop { position: relative; height: 100vh; overflow: hidden; background: linear-gradient(#234a68, #1e425f 45%, #173449); }
.wallpaper { position: absolute; inset: 0; width: 100%; height: 100%; }
.draw { width: 100%; height: auto; }
.canvas { position: relative; }

/* window frames */
.win {
  position: absolute;
  display: flex;
  flex-direction: column;
  border: 1px solid #8b8070;
  border-radius: 5px 5px 0 0;
  background: #ebe8e4;
  padding: 0 3px 3px;
}
.bar {
  flex: none;
  display: flex;
  align-items: center;
  height: 25px;
  margin: 0 -3px;
  padding: 0 4px 0 8px;
  gap: 4px;
  border-bottom: 1px solid #a49a8c;
  border-radius: 4px 4px 0 0;
  background: linear-gradient(#fff, #ebe7e2 10%, #dcd5cb);
}
.bar h1 { flex: 1; text-align: center; font: 500 16px/24px "Noto Sans", sans-serif; color: #6a6663; white-space: nowrap; overflow: hidden; }
.bar .app { width: 14px; height: 12px; }
.bar button { display: grid; place-items: center; flex: none; width: 20px; height: 20px; padding: 0; border: 1px solid #95897b; border-radius: 3px; background: linear-gradient(#fff, #e9e4dd); }
.bar button svg { width: 12px; height: 12px; }
.bar .x { margin-left: 17px; }
.body { flex: 1; background: #ebefb5; overflow: hidden; }
.w-main { left: 85px; top: 11px; width: 1140px; height: 170px; }
.w-bc { left: 82px; top: 181px; width: 589px; height: 206px; }
.w-ps { left: 671px; top: 186px; width: 582px; height: 256px; }
.w-vp { left: 5px; top: 387px; width: 333px; height: 525px; }
.w-sc { left: 339px; top: 387px; width: 332px; height: 379px; }
.w-ic { left: 339px; top: 766px; width: 332px; height: 170px; }
.w-tm { left: 672px; top: 446px; width: 413px; height: 420px; }
.w-pw { left: 672px; top: 870px; width: 408px; height: 60px; }
.w-kl { left: 1088px; top: 446px; width: 198px; height: 490px; }

/* raised controls */
.b {
  display: flex;
  align-items: center;
  justify-content: center;
  flex: none;
  min-width: 16px;
  height: 16px;
  padding: 0;
  border: 2px solid;
  border-color: #bdf2ff #3d7b8c #3d7b8c #bdf2ff;
  background: #73dfff;
  color: #000;
  font: inherit;
  white-space: nowrap;
}
.b.in { border-color: #3d7b8c #bdf2ff #bdf2ff #3d7b8c; }
.b .i { width: 8px; height: 8px; }
.b .d { width: 7px; height: 7px; }
.b .d:has([href="#dots"]) { width: 5px; height: 5px; }
.b.m { width: 14px; min-width: 14px; height: 12px; }
.b.s { width: 12px; min-width: 12px; height: 12px; }
.w20 { width: 20px; } .w28 { width: 28px; } .w32 { width: 32px; } .w35 { width: 35px; } .w81 { width: 81px; } .w123 { width: 123px; }
.w28, .w35, .w81, .w123 { justify-content: flex-start; padding-left: 3px; }
.pin { position: absolute; }
.lamp { display: block; width: 10px; height: 10px; border-radius: 50%; background: #fd0000; flex: none; }
.lamp.off { background: #c8c8c8; }
.lamp.w { background: #fff; }
.lamp.ok { background: #00cd00; }
.lcd { height: 20px; background: #ebebeb; color: #00cd00; font-size: 17px; line-height: 20px; text-align: center; }
input { border: 2px solid; border-color: #3d7b8c #bdf2ff #bdf2ff #3d7b8c; border-radius: 0; background: #73dfff; padding: 0; min-width: 0; font: 13px/15px "Liberation Mono", monospace; color: #000; }
.t8 { font: 8px "DejaVu Sans Mono", monospace; }
.t10 { font: 10px "DejaVu Sans Mono", monospace; }
.t12 { font: 12px "Liberation Mono", monospace; }
.t17 { font: 17px "DejaVu Sans Mono", monospace; }
.t20 { font: 20px "Liberation Mono", monospace; }
.grn { fill: #00cd00; }

/* L.adl */
.main { display: flex; flex-direction: column; }
.groups { display: flex; gap: 3px; padding: 4px 4px 0; }
.g { flex-basis: 0; min-width: 0; height: 39px; padding-top: 1px; background: #d6db9d; }
.g > div { display: flex; justify-content: space-around; }
.g.near > div { justify-content: center; gap: 6px; }
.g h2 { font-size: 17px; line-height: 22px; text-align: center; white-space: nowrap; }
.g30 { flex-grow: 30; } .g36 { flex-grow: 36; } .g40 { flex-grow: 40; } .g50 { flex-grow: 50; } .g55 { flex-grow: 55; }
.g60 { flex-grow: 60; } .g70 { flex-grow: 70; } .g75 { flex-grow: 75; } .g95 { flex-grow: 95; } .g111 { flex-grow: 111; }
.g115 { flex-grow: 115; } .g150 { flex-grow: 150; }
.linac { display: grid; grid-template-columns: 51px 1fr; padding: 3px 55px 0 0; }
.acis { display: flex; flex-direction: column; align-items: center; gap: 2px; padding: 9px 4px 0 0; text-align: center; }
.linac .pin { top: 10px; }
.p-l5 { left: 104px; } .p-ps { left: 220px; } .p-l4 { left: 386px; } .p-l3 { left: 501px; } .p-gl { left: 647px; }
.p-l2 { left: 742px; } .p-rfg { left: 866px; } .p-l1 { left: 950px; } .p-pcg { left: 991px; }
.linac .p-bc { left: 508px; top: 47px; width: 98px; height: 14px; gap: 4px; font-size: 8px; }
.status { display: flex; justify-content: space-between; padding: 2px 14px 0 53px; }
.status span { display: flex; align-items: center; gap: 3px; white-space: nowrap; height: 21px; }
.status output { height: 11px; line-height: 12px; padding-left: 3px; background: #bbbf84; color: #1c7000; }
.s110 { width: 110px; } .s116 { width: 116px; } .s124 { width: 124px; } .s50 { width: 50px; }
.status span .tall { height: 21px; line-height: 20px; }
.p-cs { right: 2px; top: 2px; width: 119px; gap: 6px; }

/* power supplies */
.supplies { display: flex; gap: 15px; padding: 6px 7px 0 8px; }
.pair { display: flex; gap: 6px; flex: 210 1 0; }
.col { display: flex; flex-direction: column; gap: 3px; flex: 1; }
.col.sc { flex: 109 1 0; }
.wide .col { gap: 5px; }
.ps { display: grid; grid-template-columns: 1fr 16px; grid-template-rows: 24px 21px 20px; padding: 0 1px 1px; background: #d6db9d; }
.wide .ps { grid-template-rows: 41px 21px 20px; padding-bottom: 0; }
.ps h3 { padding: 1px 0 0 2px; font: 12px/16px "Liberation Mono", monospace; }
.ps.ctr h3 { padding: 3px 0 0 10px; }
.ps h3 small { display: block; font: 10px/10px "DejaVu Sans Mono", monospace; }
.ps > .b { margin-top: 2px; }
.mid { grid-column: 1 / -1; display: flex; justify-content: space-between; align-items: flex-end; }
.mid span { display: flex; flex-direction: column; align-items: center; line-height: 10px; }
.mid output { width: 44px; height: 14px; margin-bottom: 2px; background: #ebebeb; color: #00cd00; font: 12px/15px "Liberation Mono", monospace; text-align: center; }
.sl { grid-column: 1 / -1; height: 20px; background: #73dfff; }
.sl p { display: grid; grid-template-columns: 1fr auto 1fr; height: 10px; line-height: 10px; padding: 0 1px; }
.sl p span:last-child { text-align: right; }
.sl input { appearance: none; display: block; width: calc(100% - 2px); height: 8px; margin: 1px; border-width: 2px 1px 1px 2px; background: #60bad6; }
.sl input::-webkit-slider-thumb { appearance: none; width: 30px; height: 5px; border: 1px solid; border-color: #bdf2ff #3d7b8c #3d7b8c #bdf2ff; background: linear-gradient(90deg, #73dfff 13px, #3d7b8c 13px, #3d7b8c 14px, #bdf2ff 14px, #bdf2ff 15px, #73dfff 15px); }
.sc .ps { grid-template-rows: 18px 14px 19px; }
.sc .sl input { height: 7px; }
.sc .mid { align-items: center; justify-content: flex-start; gap: 1px; white-space: nowrap; }
.sc .mid output { margin: 0; background: #dadada; color: #000; }
.sc .ps h3 { padding-top: 0; }
.sc .sl { height: 19px; margin: 0 2px; }

/* vacuum pumps */
.vp { display: flex; flex-direction: column; gap: 2px; padding: 3px 1px 3px 4px; background: #d6db9d; }
.olive { flex: none; background: #8a8139; }
.vhead { height: 70px; margin-bottom: 1px; padding-top: 11px; text-align: center; line-height: 9px; }
.vhead h2 { margin-bottom: 7px; font: 20px/24px "Liberation Mono", monospace; }
.pump { height: 76px; padding: 4px 3px 4px 2px; color: #fff; }
.box { display: grid; grid-template-columns: 68px 1fr 88px; column-gap: 4px; height: 68px; padding: 3px 6px 0 4px; border: 1px solid #fff; }
.modes b { display: block; height: 18px; margin-bottom: 4px; border: 2px solid #000; background: #fff04a; color: #000; font: 11px/15px "Liberation Mono", monospace; text-align: center; white-space: nowrap; }
.modes .norm { background: #51dc3c; }
.press { padding: 9px 0 0 8px; text-align: center; white-space: nowrap; }
.press output { width: 130px; height: 30px; margin: 0 0 3px; background: #000; color: #00cd00; font: 32px/33px "Liberation Sans", sans-serif; }
.first .press { padding-top: 17px; }
.first .press output { margin-bottom: 0; }
.sps { display: flex; flex-direction: column; align-items: flex-end; padding-top: 6px; }
.sps span { display: flex; justify-content: flex-end; align-items: center; gap: 9px; width: 49px; height: 14px; margin-bottom: 8px; border: 1px solid #fff; }
.sps i { width: 10px; height: 10px; margin-right: 1px; background: #fd0000; }
.sps h3 { margin-top: -4px; font: 12px/14px "Liberation Mono", monospace; }
.gates { flex: 1; min-height: 0; display: flex; margin: 1px 1px 0 0; padding: 10px 28px 0 28px; background: #a5a364; font: 12px/14px "Liberation Mono", monospace; }
.gates h3 { font: 17px/18px "DejaVu Sans Mono", monospace; padding-left: 7px; }
.gv { width: 104px; }
.gv p { display: flex; align-items: center; gap: 8px; padding-left: 16px; }
.gv .second { margin-top: 24px; }
.gv.left p { justify-content: flex-end; gap: 8px; width: 59px; padding: 0; }
.gv .b { width: 35px; margin: 2px 0 6px 38px; font: 10px "DejaVu Sans Mono", monospace; }
.il { display: flex; flex-direction: column; align-items: center; gap: 2px; margin: 22px 0 0 auto; font: 8px/10px "DejaVu Sans Mono", monospace; }

/* motors */
.motor { display: flex; flex-direction: column; width: 122px; padding: 3px 4px 1px 6px; background: #c8c8c8; }
.motor .lcd { width: 60px; margin: 0 auto 10px; }
.motor.t .lcd { width: 75px; }
.r1, .r2, .r3 { display: flex; align-items: center; justify-content: space-between; gap: 2px; }
.r1 input { flex: 1; height: 23px; }
.r1 .b { width: 48px; height: 23px; font: 13px "Liberation Mono", monospace; }
.t .r1 { gap: 4px; }
.t .r1 .b { width: 40px; height: 20px; }
.r2 { margin: 6px 0 2px; padding: 0 2px; }
.r2 input { flex: 1; height: 19px; font-size: 12px; }
.r2 .b { width: 14px; min-width: 14px; height: 19px; }
.r3 span { padding-bottom: 6px; }
.r3 .b { width: 25px; height: 18px; }
.mcol { display: flex; flex-direction: column; align-items: center; width: 122px; }
.mcol h3 { display: flex; align-items: center; gap: 6px; font: 13px/15px "Liberation Mono", monospace; white-space: nowrap; }
.mcol h3 .b { height: 14px; }
.mcol small { font-size: 8px; line-height: 10px; }

/* scraper */
.srow { display: grid; grid-template-columns: 122px 1fr; padding-left: 85px; }
.srow .mcol h3 { margin-top: 6px; }
.xl h3 { padding-left: 24px; }
.side { display: flex; flex-direction: column; align-items: center; padding: 5px 2px 0 4px; }
.side h3 { font: 13px/14px "Liberation Mono", monospace; }
.side .lcd { width: 60px; }
.stopall { width: 80px; height: 25px; font: 13px "Liberation Mono", monospace; }
.side .stopall { height: 23px; align-self: flex-end; margin-bottom: 24px; }
.side .beam { width: 96px; height: 20px; margin-top: 21px; align-self: flex-end; }
.side.low { padding-top: 19px; }
.side .cal { margin-top: 66px; }
.cal { width: 99px; gap: 7px; }

/* interlocks */
.ic { background: #bbb; }
.ic h2, .ic h3 { font: 13px/16px "Liberation Mono", monospace; text-align: center; color: #222; }
.ic h2 { padding: 5px 12px 10px 0; }
.ilocks { display: flex; gap: 3px; padding: 0 6px 0 3px; }
.frame { flex: 1; height: 120px; border: 1px solid #000; padding: 0 11px 0 6px; }
.frame h3 { padding-bottom: 5px; }
.frame p { display: flex; align-items: center; gap: 2px; height: 14px; white-space: nowrap; }
.frame i { width: 22px; height: 12px; border: 1px solid #000; background: #00cd00; }
.frame i:first-of-type { margin-left: auto; }
.frame .h { background: repeating-linear-gradient(135deg, #00cd00 0 3px, #000 3px 6px); }
.frame .permit { height: 18px; margin: 10px -4px 0 0; padding: 0 4px 0 8px; background: #dadada; }

/* table motion */
.table { display: flex; flex-direction: column; }
.thead { display: flex; justify-content: flex-end; align-items: center; gap: 5px; padding: 3px 8px 0; }
.thead h2 { font: 20px/28px "Liberation Mono", monospace; }
.axes { display: flex; align-items: flex-end; gap: 2px; padding: 7px 2px 0 3px; }
.axes .mcol h3 { padding-left: 18px; font: 17px/20px "DejaVu Sans Mono", monospace; gap: 4px; }
.axes .xoff { margin-left: auto; }
.brake { width: 57px; align-self: flex-start; text-align: center; padding-top: 17px; }
.brake small { display: block; font-size: 10px; line-height: 11px; }
.brake > div { display: flex; flex-direction: column; align-items: center; gap: 2px; height: 38px; padding: 4px 2px; background: #00cd00; }
.brake output { width: 100%; height: 12px; background: #dadada; }
.brake .b { width: 40px; height: 17px; }
.limits { display: flex; gap: 3px; padding: 2px 44px 1px 40px; font: 12px/14px "Liberation Mono", monospace; }
.limits div { flex: 163 1 0; display: flex; justify-content: space-between; align-items: center; height: 19px; padding: 0 5px 0 3px; border: 1px solid #000; }
.limits div + div { flex-grow: 155; }
.limits output { width: 34px; background: #dadada; text-align: center; }
.limits .w40 { width: 40px; }
.brakes { display: flex; justify-content: space-between; align-items: flex-end; height: 50px; padding-left: 2px; }
fieldset { display: grid; grid-template-columns: 10px 50px 10px 50px; align-items: center; gap: 1px; width: 128px; height: 39px; padding: 0 1px; border: 1px solid #000; font: 12px "Liberation Mono", monospace; }
legend { float: left; grid-column: 1 / -1; justify-self: center; padding: 0; font: 10px/12px "DejaVu Sans Mono", monospace; }
fieldset .b { width: 50px; height: 12px; font: 9px/8px "DejaVu Sans Mono", monospace; border-width: 1px 2px; }
.z0 { align-self: flex-start; margin: 2px 40px 0 0; font: 12px/14px "Liberation Mono", monospace; }
.redbox { margin-bottom: 4px; padding: 5px; background: #fd0000; }
.note { padding: 4px 4px 4px; }
.cum { display: flex; gap: 20px; align-items: flex-start; border-top: 2px solid #000; padding: 11px 20px 0 12px; white-space: nowrap; }
.cum h3 { font-size: 17px; line-height: 20px; text-align: center; }
.cum > h3 { flex: 1; padding-top: 4px; margin-right: -9px; }
.cum > div { width: 100px; }
.cum div h3 { display: flex; justify-content: flex-end; align-items: center; margin-right: -6px; }
.cum .xo h3 { margin-right: -16px; }
.cum small { font-size: 8px; }
.cum .lcd { color: #23900c; }
.pw { background: #d6db9d; }
.pw h2 { padding-left: 10px; font-size: 17px; line-height: 24px; text-align: center; white-space: nowrap; }

/* klystron */
.kly { background: #d6db9d; padding-left: 2px; white-space: nowrap; }
.kly h2 { padding: 3px 0 6px 8px; font-size: 12px; line-height: 15px; }
.timing { display: grid; grid-template-columns: 32px 33px 1fr; gap: 2px; align-items: end; height: 70px; }
.timing > input { height: 18px; font-size: 10px; }
.rates { display: flex; flex-direction: column; justify-content: space-between; height: 66px; align-self: center; }
.rates output { height: 16px; background: #ebebeb; color: #00cd00; font: 13px/17px "Liberation Mono", monospace; text-align: center; }
.menu { display: flex; flex-direction: column; background: #73dfff; }
.menu .b { height: 17px; width: 110px; font-size: 12px; }
.menu .b + .b { width: 108px; }
.amp { height: 100px; margin: 5px 0 0 3px; padding: 2px 3px; border: 5px solid #fff; border-radius: 6px; background: #ebefb5; overflow: hidden; line-height: 9px; }
.lamps { display: flex; gap: 3px; }
.lamps span { display: flex; flex-direction: column; align-items: center; white-space: pre; min-width: 18px; }
.lamps .lamp { margin-top: 2px; }
.lamps em { display: flex; gap: 8px; }
.lamps .vac { padding: 0 1px 0 8px; }
.lamps .llrf { gap: 5px; }
.llrf .b { margin-right: -28px; }
.resets { display: flex; gap: 2px; margin-top: 1px; }
.resets .b { width: 38px; }
.resets .on { width: 21px; }
.resets .on + .on { margin-left: -2px; }
.gate { display: flex; gap: 3px; padding-top: 1px; }
.gate div { text-align: center; width: 52px; }
.gate > .b { margin: 3px -10px 0 -8px; }
.gate span { display: block; }
.gate output { margin-right: 2px; height: 19px; background: #dadada; font: 13px/18px "Liberation Mono", monospace; }
.gate .us { padding-top: 20px; font: 13px/15px "Liberation Mono", monospace; }
.gate strong { padding-top: 2px; font: bold 34px/36px "Liberation Sans", sans-serif; }
.cap { padding-left: 47px; line-height: 12px; }
.sl.k { height: 24px; margin-left: 13px; width: 180px; }
.sl.k p { height: 13px; line-height: 13px; grid-template-columns: 66px 1fr auto; padding-right: 20px; }
.sl.k input { height: 9px; margin: 0 1px; }
.drive { display: flex; gap: 5px; padding-top: 3px; }
.drive > div:first-child { width: 73px; }
.drive span { display: block; line-height: 11px; padding-left: 8px; }
.drive .rd { height: 20px; margin-bottom: 1px; background: #ebebeb; color: #fd0000; font: bold 17px/20px "DejaVu Sans Mono", monospace; text-align: center; }
.drive .at { display: flex; align-items: center; gap: 6px; padding-left: 5px; }
.at output { width: 46px; background: #dadada; text-align: center; }
.di { padding-top: 1px; }
.di .b { width: 41px; height: 18px; font: 12px "Liberation Mono", monospace; }
.drive .attn span { font: 12px/11px "Liberation Mono", monospace; padding: 0; }
.attn output { margin-left: 3px; padding-left: 12px; height: 16px; background: #ebebeb; color: #fff; font: 13px/16px "Liberation Mono", monospace; }
.pfn { height: 103px; margin: 3px -40px 0 3px; padding: 2px 0 0 6px; border: 5px solid #fd0000; border-radius: 4px; }
.pfn .sl.k { margin: 2px 0 0; }
.ptop { display: flex; gap: 3px; }
.ptop > div { display: block; padding-left: 5px; }
.ptop span { display: block; line-height: 10px; }
.ptop .lim { display: flex; gap: 6px; padding-left: 30px; }
.pfn output { width: 46px; background: #dadada; text-align: center; }
.gauge { width: 180px; margin-top: 2px; padding: 3px 10px; height: 20px; border: 1px solid; border-color: #ddd #777 #777 #ddd; background: #c8c8c8; }
.gauge div { height: 12px; border: 2px solid; border-color: #777 #ddd #ddd #777; background: #bbb; }
.gauge i { display: block; width: 6px; height: 9px; background: #00cd00; }
.pbot { display: flex; align-items: center; gap: 7px; padding: 3px 0 0 23px; }
.pfn .blk { width: 60px; height: 16px; background: #000; color: #00cd00; font: 13px/16px "Liberation Mono", monospace; }
.pbot span { line-height: 10px; }
.pbot span output { line-height: 10px; }
.fwd { height: 110px; margin: 3px -40px 0 -1px; padding-left: 1px; }
.fwd > div { display: flex; gap: 3px; height: 28px; align-items: flex-start; }
.fwd > div > output { margin-top: 3px; height: 20px; width: 120px; padding-left: 15px; font: 17px/21px "DejaVu Sans Mono", monospace; text-align: left; }
.fwd > div > .pw1 { background: #c8c8c8; }
.fwd > div > .pw2 { padding-left: 9px; background: #00cd00; }
.fwd span output { margin-left: 15px; font: 12px/13px "Liberation Mono", monospace; }
.fwd .b { margin-top: 8px; }
```
